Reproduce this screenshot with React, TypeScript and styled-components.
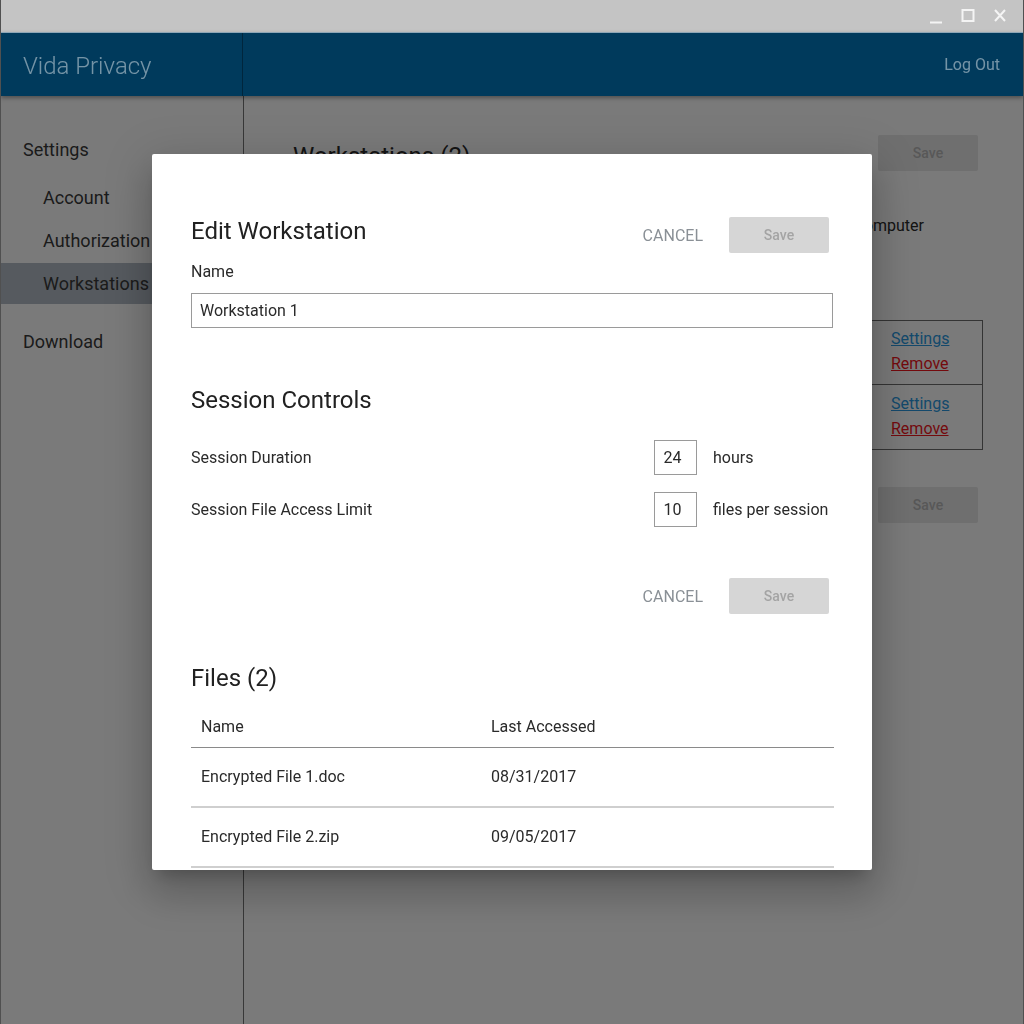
import styled, { createGlobalStyle } from 'styled-components';

const GlobalStyle = createGlobalStyle`
    html, body {
        margin: 0;
        padding: 0;
        background: #ffffff;
    }
    body {
        font-family: Roboto, "Liberation Sans", sans-serif;
        color: #3a3a3a;
    }
    * {
        box-sizing: border-box;
    }
`;

const Window = styled.div`
    width: 1024px;
    height: 1024px;
    display: flex;
    flex-direction: column;
    overflow: hidden;
    border-left: 1px solid #a8a8a8;
    border-right: 1px solid #a8a8a8;
`;

const TitleBar = styled.div`
    position: relative;
    z-index: 3;
    height: 32px;
    background: #c4c4c4;
    display: flex;
    justify-content: flex-end;
    align-items: center;
    gap: 14px;
    padding-right: 14px;
`;

const WinButton = styled.svg`
    width: 18px;
    height: 18px;
    stroke: #f4f4f4;
    stroke-width: 2;
    fill: none;
`;

const AppHeader = styled.header`
    position: relative;
    z-index: 3;
    height: 64px;
    display: flex;
    background: #003a5c;
    border-top: 1px solid #8ea6b6;
    box-shadow: 0px 2px 4px rgba(0, 0, 0, 0.35);
`;

const Brand = styled.div`
    width: 242px;
    display: flex;
    align-items: center;
    padding-left: 22px;
    padding-top: 2px;
    border-right: 1px solid #00263d;
    font-size: 24px;
    font-weight: 300;
    color: rgba(255, 255, 255, 0.46);
`;

const HeaderRight = styled.div`
    flex: 1;
    display: flex;
    justify-content: flex-end;
    align-items: center;
    padding-right: 23px;
    font-size: 16px;
    color: rgba(255, 255, 255, 0.46);
`;

const Body = styled.div`
    flex: 1;
    display: flex;
`;

const Sidebar = styled.nav`
    width: 243px;
    border-right: 1px solid #767676;
    padding-top: 41px;
    display: flex;
    flex-direction: column;
`;

const NavHeading = styled.div<{ $top?: number }>`
    font-size: 18px;
    height: 26px;
    line-height: 26px;
    padding-left: 22px;
    margin-top: ${(p) => p.$top ?? 0}px;
    margin-bottom: 14px;
    color: #3a3a3a;
`;

const NavItem = styled.div<{ $active?: boolean }>`
    height: 41px;
    line-height: 41px;
    margin-bottom: 2px;
    padding-left: 42px;
    font-size: 18px;
    color: #3a3a3a;
    background: ${(p) => (p.$active ? '#b3bdc6' : 'transparent')};
`;

const Main = styled.main`
    flex: 1;
    padding: 39px 45px 0 49px;
    display: flex;
    flex-direction: column;
`;

const MainTitleRow = styled.div`
    display: flex;
    justify-content: space-between;
    align-items: center;
    height: 36px;
`;

const MainTitle = styled.h1`
    margin: 0;
    font-size: 24px;
    font-weight: 400;
    color: #2a2a2a;
    padding-top: 6px;
`;

const BgButton = styled.div`
    width: 100px;
    height: 36px;
    border-radius: 2px;
    background: #e8e8e8;
    color: #b8b8b8;
    font-size: 14px;
    font-weight: 500;
    display: flex;
    align-items: center;
    justify-content: center;
`;

const BgNote = styled.div`
    margin-top: 45px;
    padding-right: 54px;
    text-align: right;
    font-size: 16px;
    color: #2a2a2a;
`;

const BgTable = styled.div`
    margin-top: 85px;
    margin-right: -5px;
    border: 1px solid #6e6e6e;
`;

const BgRow = styled.div<{ $last?: boolean }>`
    height: 64px;
    display: flex;
    flex-direction: column;
    align-items: flex-end;
    justify-content: center;
    gap: 3px;
    padding-right: 44px;
    padding-bottom: 2px;
    border-bottom: ${(p) => (p.$last ? 'none' : '1px solid #6e6e6e')};
`;

const BgLink = styled.a<{ $danger?: boolean }>`
    width: 47px;
    font-size: 16px;
    line-height: 22px;
    text-decoration: underline;
    color: ${(p) => (p.$danger ? '#f2161c' : '#2a9ae2')};
`;

const BgActions = styled.div`
    margin-top: 37px;
    display: flex;
    justify-content: flex-end;
`;

const Overlay = styled.div`
    position: fixed;
    inset: 0;
    z-index: 2;
    background: rgba(0, 0, 0, 0.52);
`;

const Modal = styled.section`
    position: absolute;
    z-index: 4;
    left: 152px;
    top: 154px;
    width: 720px;
    height: 716px;
    overflow: hidden;
    background: #ffffff;
    border-radius: 2px;
    padding: 63px 39px 0 39px;
    box-shadow:
        0px 11px 15px -7px rgba(0, 0, 0, 0.2),
        0px 24px 38px 3px rgba(0, 0, 0, 0.14),
        0px 9px 46px 8px rgba(0, 0, 0, 0.12);
`;

const SectionHead = styled.div`
    display: flex;
    justify-content: space-between;
    align-items: flex-start;
    height: 36px;
`;

const SectionTitle = styled.h2<{ $top?: number }>`
    margin: ${(p) => p.$top ?? 0}px 0 0 0;
    font-size: 24px;
    font-weight: 400;
    line-height: 28px;
    color: #212121;
`;

const Actions = styled.div<{ $top?: number }>`
    display: flex;
    align-items: center;
    justify-content: flex-end;
    gap: 26px;
    padding-right: 4px;
    margin-top: ${(p) => p.$top ?? 0}px;
`;

const TextButton = styled.button`
    border: none;
    background: none;
    padding: 0;
    font-family: inherit;
    font-size: 16px;
    color: #8a9096;
    text-transform: uppercase;
`;

const SaveButton = styled.button`
    width: 100px;
    height: 36px;
    border: none;
    border-radius: 2px;
    background: #d6d6d6;
    color: #a4a4a4;
    font-family: inherit;
    font-size: 14px;
    font-weight: 500;
`;

const FieldLabel = styled.label`
    display: block;
    margin-top: 9px;
    font-size: 16px;
    line-height: 20px;
    color: #2a2a2a;
`;

const TextInput = styled.div`
    margin-top: 11px;
    height: 35px;
    border: 1px solid #9a9a9a;
    padding-left: 8px;
    display: flex;
    align-items: center;
    font-size: 16px;
    color: #2a2a2a;
`;

const ControlRow = styled.div<{ $top: number }>`
    margin-top: ${(p) => p.$top}px;
    display: flex;
    align-items: center;
    font-size: 16px;
    color: #2a2a2a;
`;

const ControlLabel = styled.div`
    flex: 1;
`;

const NumberBox = styled.div`
    width: 43px;
    height: 35px;
    border: 1px solid #9a9a9a;
    display: flex;
    align-items: center;
    justify-content: center;
    padding-right: 6px;
`;

const Unit = styled.div`
    width: 120px;
    margin-left: 16px;
`;

const Table = styled.div`
    margin-top: 14px;
    width: 643px;
`;

const TableRow = styled.div<{ $head?: boolean }>`
    display: grid;
    grid-template-columns: 290px 1fr;
    align-items: center;
    height: ${(p) => (p.$head ? '42px' : '60px')};
    padding-bottom: ${(p) => (p.$head ? '0' : '2px')};
    border-bottom: ${(p) => (p.$head ? '1px solid #8a8a8a' : '2px solid #cfcfcf')};
    font-size: 16px;
    color: #2a2a2a;
`;

const Cell = styled.div`
    padding-left: 10px;
`;

const files = [
    { name: 'Encrypted File 1.doc', accessed: '08/31/2017' },
    { name: 'Encrypted File 2.zip', accessed: '09/05/2017' },
];

export default function App() {
    return (
        <>
            <GlobalStyle />
            <Window>
                <TitleBar>
                    <WinButton viewBox="0 0 18 18">
                        <path d="M3 15.5h12" />
                    </WinButton>
                    <WinButton viewBox="0 0 18 18">
                        <rect x="3.5" y="3" width="11" height="11" />
                    </WinButton>
                    <WinButton viewBox="0 0 18 18">
                        <path d="M4 3l10 11M14 3L4 14" />
                    </WinButton>
                </TitleBar>
                <AppHeader>
                    <Brand>Vida Privacy</Brand>
                    <HeaderRight>Log Out</HeaderRight>
                </AppHeader>
                <Body>
                    <Sidebar>
                        <NavHeading>Settings</NavHeading>
                        <NavItem>Account</NavItem>
                        <NavItem>Authorization</NavItem>
                        <NavItem $active>Workstations</NavItem>
                        <NavHeading $top={23}>Download</NavHeading>
                    </Sidebar>
                    <Main>
                        <MainTitleRow>
                            <MainTitle>Workstations (2)</MainTitle>
                            <BgButton>Save</BgButton>
                        </MainTitleRow>
                        <BgNote>this computer</BgNote>
                        <BgTable>
                            <BgRow>
                                <BgLink>Settings</BgLink>
                                <BgLink $danger>Remove</BgLink>
                            </BgRow>
                            <BgRow $last>
                                <BgLink>Settings</BgLink>
                                <BgLink $danger>Remove</BgLink>
                            </BgRow>
                        </BgTable>
                        <BgActions>
                            <BgButton>Save</BgButton>
                        </BgActions>
                    </Main>
                </Body>
            </Window>
            <Overlay />
            <Modal>
                <SectionHead>
                    <SectionTitle>Edit Workstation</SectionTitle>
                    <Actions>
                        <TextButton>Cancel</TextButton>
                        <SaveButton>Save</SaveButton>
                    </Actions>
                </SectionHead>
                <FieldLabel>Name</FieldLabel>
                <TextInput>Workstation 1</TextInput>

                <SectionTitle $top={58}>Session Controls</SectionTitle>
                <ControlRow $top={26}>
                    <ControlLabel>Session Duration</ControlLabel>
                    <NumberBox>24</NumberBox>
                    <Unit>hours</Unit>
                </ControlRow>
                <ControlRow $top={17}>
                    <ControlLabel>Session File Access Limit</ControlLabel>
                    <NumberBox>10</NumberBox>
                    <Unit>files per session</Unit>
                </ControlRow>
                <Actions $top={51}>
                    <TextButton>Cancel</TextButton>
                    <SaveButton>Save</SaveButton>
                </Actions>

                <SectionTitle $top={50}>Files (2)</SectionTitle>
                <Table>
                    <TableRow $head>
                        <Cell>Name</Cell>
                        <Cell>Last Accessed</Cell>
                    </TableRow>
                    {files.map((f) => (
                        <TableRow key={f.name}>
                            <Cell>{f.name}</Cell>
                            <Cell>{f.accessed}</Cell>
                        </TableRow>
                    ))}
                </Table>
            </Modal>
        </>
    );
}
